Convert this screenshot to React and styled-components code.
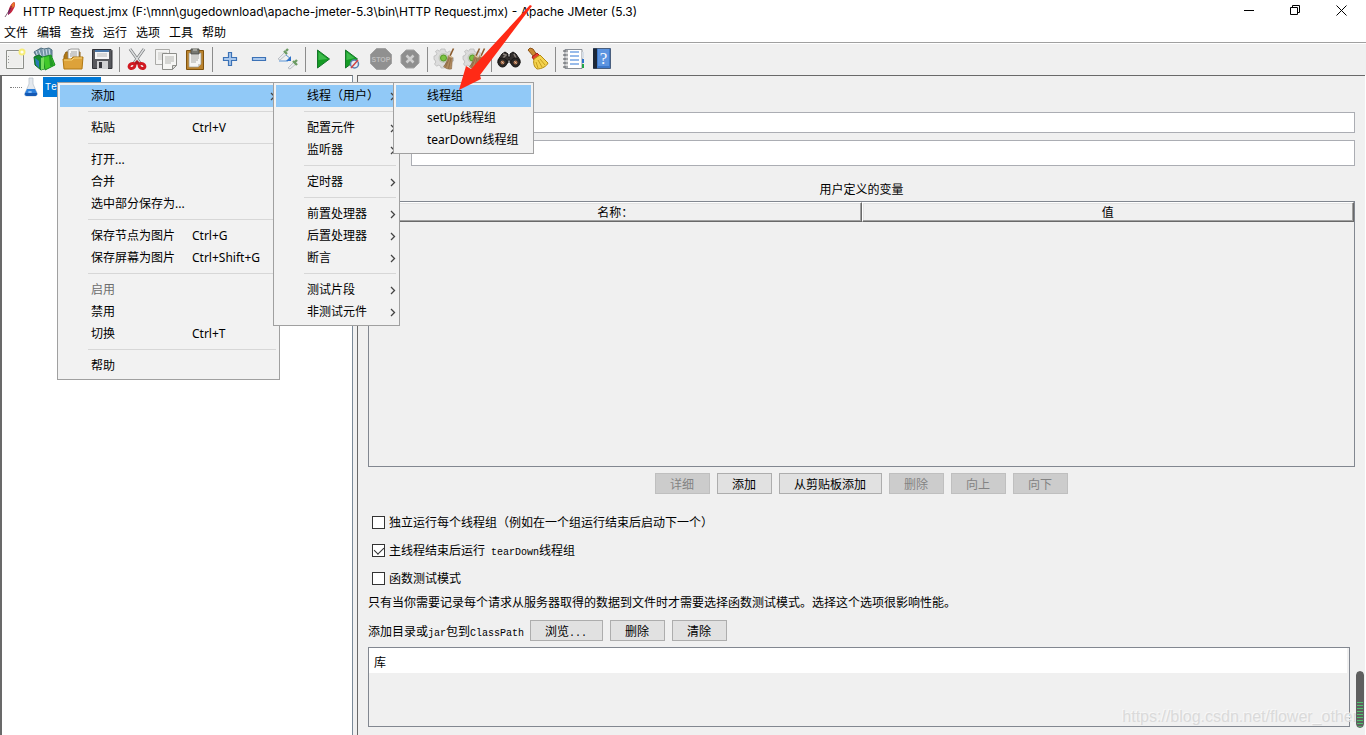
import React from "react";
import styled, { createGlobalStyle } from "styled-components";

// Data
const menuBar = ["文件", "编辑", "查找", "运行", "选项", "工具", "帮助"];

const threadMenu = [{ label: "线程组", active: true }, { label: "setUp线程组" }, { label: "tearDown线程组" }];

const addMenu = [
  { label: "线程（用户）", active: true, arrow: true, children: threadMenu, childWidth: 141 },
  null,
  { label: "配置元件", arrow: true },
  { label: "监听器", arrow: true },
  null,
  { label: "定时器", arrow: true },
  null,
  { label: "前置处理器", arrow: true },
  { label: "后置处理器", arrow: true },
  { label: "断言", arrow: true },
  null,
  { label: "测试片段", arrow: true },
  { label: "非测试元件", arrow: true },
];

const contextMenu = [
  { label: "添加", active: true, arrow: true, children: addMenu, childWidth: 127 },
  null,
  { label: "粘贴", shortcut: "Ctrl+V" },
  null,
  { label: "打开..." },
  { label: "合并" },
  { label: "选中部分保存为..." },
  null,
  { label: "保存节点为图片", shortcut: "Ctrl+G" },
  { label: "保存屏幕为图片", shortcut: "Ctrl+Shift+G" },
  null,
  { label: "启用", disabled: true },
  { label: "禁用" },
  { label: "切换", shortcut: "Ctrl+T" },
  null,
  { label: "帮助" },
];

// Toolbar drawings, all on a 24 x 24 grid
const Gear = () => (
  <>
    <path
      d="M8 2h4l.5 2.5 2 .8L16.700 4l2 2.300-1.400 2 .8 2 2.400.5v3.200l-2.400.5-.8 2L18.500 18.500 16 20.500l-2-1.500-2 .8L11.500 21H8l-.5-2-2-.8-2 1L1.500 17l1.300-2-.8-2L1 12.500V9l2-.5.800-2L2.500 4.500 4.500 3l2 1.200z"
      fill="#dcdcdc"
      stroke="#b4b4b4"
      strokeWidth=".7"
    />
    <circle cx="10.500" cy="11" r="5" fill="#c2c9bb" />
    <circle cx="10.500" cy="11" r="3" fill="#7cc242" stroke="#559a25" />
  </>
);

const Brush = ({ x = 0 }) => (
  <g transform={`translate(${x} 0)`}>
    <path d="M20.500 1.500L17 9" stroke="#8b5a2b" strokeWidth="1.600" />
    <path d="M15.500 8.500l4 2-1 11.500c-3 .5-6-.5-8-2.500 2-2 4-6 5-11z" fill="#b08a5e" stroke="#8a6844" strokeWidth=".6" />
    <path d="M16.500 10.500l-4 10M18 11l-2.500 10.500M14 15l-2.500 4" stroke="#7d5c3a" strokeWidth=".6" />
    <path d="M15.500 8.500l4 2" stroke="#e0c7a0" strokeWidth="1.200" />
  </g>
);

const icons = {
  新建: (
    <>
      <path d="M3.500 3.500h17v18h-17z" fill="#f4f5f3" stroke="#8d8f8a" />
      <path d="M5 5h14v15H5z" fill="#eeeeec" />
      <path d="M5.500 9v1M5.500 12v1M5.500 15v1" stroke="#999" />
      <circle cx="19" cy="5" r="3.500" fill="#f6ec78" />
      <circle cx="19" cy="5" r="1.600" fill="#fffef0" />
    </>
  ),
  模板: (
    <>
      <path d="M2 5l7-4 3 1 5-1 3 2v7L6 12z" fill="#7796a8" stroke="#526f80" />
      <path d="M4 4l2 6M7 3l2 6M11 2l1 7M14 2l1 6M17 2l1 6" stroke="#cbdde8" />
      <path d="M2 10l5-2 5 3v11l-3 1-6-5z" fill="#168e2d" stroke="#0c6e23" />
      <path d="M3 11l4 3v7l-3-3z" fill="#2a7ab5" />
      <path d="M11 10l8-2 4 10-10 5z" fill="#41c82a" stroke="#168d1d" />
      <path d="M17 9h2l3 10h-4z" fill="#239a26" />
      <path d="M9 11l3-1v12l-3 1z" fill="#75dc5b" />
    </>
  ),
  打开: (
    <>
      <path d="M3 9l2-4h14v13H3z" fill="#b17815" stroke="#916313" />
      <path d="M7 3l3-1h8v12H7z" fill="#f4f4f2" stroke="#888" strokeWidth=".8" />
      <path d="M10 5h6M9 7h7M9 9h7" stroke="#a1a1a1" />
      <path d="M2 12h8l2-2h10l-1 12H3z" fill="#dda23a" stroke="#b17913" />
      <path d="M3 13h8l2-2h8" stroke="#f8d77d" />
    </>
  ),
  保存: (
    <>
      <path d="M3 2.500h18l1 1v18H2.500v-19z" fill="#57585d" stroke="#323338" />
      <path d="M5 3h14v9H5z" fill="#f6f6f6" />
      <path d="M5 3h14v2H5z" fill="#4976a8" />
      <path d="M7 7h10M7 9h10" stroke="#b7b7b7" />
      <path d="M7 14h11v8H7z" fill="#d0d1d3" />
      <path d="M9 15h3v6H9z" fill="#35363c" />
    </>
  ),
  剪切: (
    <>
      <path d="M5 2l10 14M19 2L9 16" stroke="#777a7c" strokeWidth="3" />
      <path d="M5 2l10 14M19 2L9 16" stroke="#dddfe0" strokeWidth="1.400" />
      <ellipse cx="7" cy="19" rx="3" ry="2.400" stroke="#d01921" strokeWidth="3" transform="rotate(-25 7 19)" />
      <ellipse cx="17" cy="19" rx="3" ry="2.400" stroke="#d01921" strokeWidth="3" transform="rotate(25 17 19)" />
      <path d="M9 16l3-3 3 3-3 2z" fill="#b4151c" />
    </>
  ),
  复制: (
    <>
      <path d="M1.500 2.500h14v15h-14z" fill="#f3f3f2" stroke="#aaaaa7" />
      <path d="M4 6h9M4 8h9M4 10h9M4 12h6" stroke="#c8c8c5" />
      <path d="M8.500 6.500h14v12l-4 4h-10z" fill="#f6f6f4" stroke="#8c8d89" />
      <path d="M11 10h9M11 12h9M11 14h9M11 16h6" stroke="#b4b5b1" />
      <path d="M18.500 22.500v-4h4z" fill="#dadad6" stroke="#8c8d89" />
    </>
  ),
  粘贴: (
    <>
      <path d="M3.500 3.500h17v19h-17z" fill="#ba832e" stroke="#80530e" />
      <path d="M6 6h12v11l-3 3H6z" fill="#f5f5f3" stroke="#9c9d98" strokeWidth=".7" />
      <path d="M8 9h8M8 11h8M8 13h7M8 15h5" stroke="#a9aaa6" />
      <path d="M8 2h8v5H8z" fill="#777972" stroke="#50524e" />
      <path d="M10 1h4v3h-4z" fill="#a3a49e" />
      <path d="M15 20v-3h3z" fill="#ccccc8" />
    </>
  ),
  展开: <path d="M10.500 5.500h3v5h5v3h-5v5h-3v-5h-5v-3h5z" fill="#a9c8ed" stroke="#3c72b6" strokeWidth="1.200" />,
  折叠: <path d="M5.500 10.500h13v3h-13z" fill="#a9c8ed" stroke="#3c72b6" strokeWidth="1.200" />,
  切换: (
    <>
      <path d="M2 12l7-7 2 2-7 6z" fill="#e9ecef" stroke="#a7adb4" strokeWidth=".7" />
      <path d="M8 4l3 3M10 4l2-2" stroke="#6c9b63" strokeWidth="2.400" />
      <path d="M3 14h9M10 8l5 4" stroke="#5b95d6" />
      <path d="M15 9v5h-5z" fill="#2f72c8" />
      <path d="M12 21l6-6 2 2-6 5z" fill="#e9ecef" stroke="#a7adb4" strokeWidth=".7" />
      <path d="M17 14l4 4M19 15l2-2" stroke="#6c9b63" strokeWidth="2.400" />
    </>
  ),
  启动: (
    <>
      <path d="M6.500 3L18.500 12 6.500 21z" fill="#159b24" stroke="#16762b" />
      <path d="M7.500 5l9 7-9 1z" fill="#3dbb4b" />
    </>
  ),
  不停顿开始: (
    <>
      <path d="M5.500 3L17.500 12 5.500 21z" fill="#159b24" stroke="#16762b" />
      <path d="M6.500 5l8 6-8 2z" fill="#3dbb4b" />
      <circle cx="14.500" cy="17" r="4" fill="#e5edf5" stroke="#5981b2" strokeWidth="1.500" />
      <path d="M11 21l7-8" stroke="#d34444" strokeWidth="1.500" />
    </>
  ),
  停止: (
    <>
      <path d="M7.500 1.500h9l6 6v9l-6 6h-9l-6-6v-9z" fill="#909090" stroke="#a2a2a2" />
      <text x="12" y="15" textAnchor="middle" fontFamily="Liberation Sans, sans-serif" fontSize="7" fontWeight="bold" fill="#bcbcbc">
        STOP
      </text>
    </>
  ),
  关闭: (
    <>
      <path d="M8 3h8l5 5v8l-5 5H8l-5-5V8z" fill="#8f8f8f" stroke="#a4a4a4" />
      <path d="M8.500 8.500l7 7M15.500 8.500l-7 7" stroke="#cfcfcf" strokeWidth="2.500" />
    </>
  ),
  清除: (
    <>
      <Gear />
      <Brush />
    </>
  ),
  清除全部: (
    <>
      <Gear />
      <Brush x={-3} />
      <Brush x={2} />
    </>
  ),
  查找: (
    <>
      <path d="M5 7l3-2 3 2v3h2V7l3-2 3 2 4 6v3H13v-3h-2v3H1v-3z" fill="#332f2d" stroke="#171514" />
      <path d="M6 7l3 1-3 3M17 7l2 4" stroke="#89817b" strokeWidth="1.500" />
      <circle cx="5.500" cy="15.500" r="4.500" fill="#2a2725" stroke="#191716" />
      <circle cx="18.500" cy="15.500" r="4.500" fill="#2a2725" stroke="#191716" />
      <circle cx="5.500" cy="15.500" r="2" fill="#a96f4b" />
      <circle cx="18.500" cy="15.500" r="2" fill="#a96f4b" />
      <path d="M4.500 14.500l2 2M17.500 14.500l2 2" stroke="#d8c3b0" />
    </>
  ),
  清空查找: (
    <>
      <path d="M2 3l2-2 3 1 4 6-3 2z" fill="#c98a35" stroke="#8d5317" />
      <path d="M6 10l5-4 3 3-6 4z" fill="#e3402f" stroke="#a51e14" />
      <path d="M8 12l6-4 8 8c-1 3-6 6-11 6-3-2-4-6-3-10z" fill="#f3d24e" stroke="#b68c12" />
      <path d="M12 13l4 7M14 12l5 6M10 15l2 6" stroke="#c89d1d" />
    </>
  ),
  函数助手: (
    <>
      <path d="M4 2.500h17v19H4z" fill="#fff" stroke="#8a8f96" />
      <path d="M21 5h2v6h-2z" fill="#d7dee6" />
      <path d="M21 12h2v4h-2z" fill="#2c73cf" />
      <path d="M21 17h2v4h-2z" fill="#21a546" />
      <path d="M9 5h9M9 9h9M9 13h9M9 17h9" stroke="#3379d6" strokeWidth="1.200" />
      <path d="M2 4h5M2 8h5M2 12h5M2 16h5M2 20h5" stroke="#4b4e52" strokeWidth="1.200" />
      <path d="M5 6h2M5 10h2M5 14h2M5 18h2" stroke="#b7b7b7" />
    </>
  ),
  帮助: (
    <>
      <path d="M3.500 1.500h17v20h-17z" fill="#3d78ca" stroke="#4a5f7e" />
      <path d="M3 1.500h4v20H3z" fill="#1d2838" />
      <path d="M8 2h11v17H8z" fill="#5c94e0" />
      <text x="13.500" y="17" textAnchor="middle" fontFamily="Liberation Serif, serif" fontSize="17" fill="#f6f9ff">
        ?
      </text>
    </>
  ),
};

const toolGroups = [
  ["新建", "模板", "打开", "保存"],
  ["剪切", "复制", "粘贴"],
  ["展开", "折叠", "切换"],
  ["启动", "不停顿开始", "停止", "关闭"],
  ["清除", "清除全部"],
  ["查找", "清空查找"],
  ["函数助手", "帮助"],
];

const Menu = ({ items, width, nested }) => {
  const Box = nested ? SubMenu : ContextMenu;
  return (
    <Box $width={width}>
      {items.map((item, index) => {
        if (!item) return <MenuLine key={index} />;
        return (
          <MenuRow key={index}>
            <MenuItem type="button" $active={item.active} disabled={item.disabled}>
              <MenuLabel $fixed={Boolean(item.shortcut)}>{item.label}</MenuLabel>
              {item.shortcut && <span>{item.shortcut}</span>}
              {item.arrow && (
                <MenuArrow width="6" height="9" viewBox="0 0 6 9">
                  <path d="M1 1l3.500 3.500L1 8" fill="none" stroke="#444" strokeWidth="1.300" />
                </MenuArrow>
              )}
            </MenuItem>
            {item.children && <Menu items={item.children} width={item.childWidth} nested />}
          </MenuRow>
        );
      })}
    </Box>
  );
};

const TitleBarSection = () => (
  <TitleBar>
    <svg width="12" height="16" viewBox="0 0 12 16">
      <path d="M10 0c2 1 1 5-1 8-1 2-3 4-5 5 0-5 2-11 6-13z" fill="#c8273c" />
      <path d="M10 0c1 1 1 3 0 5l-3 1c0-2 1-5 3-6z" fill="#e9782c" />
      <path d="M4 13c0-3 1-5 2-7 1 3 0 5-2 7z" fill="#7b2c79" />
      <path d="M8 4L1 15" stroke="#52213d" strokeWidth=".7" />
    </svg>
    <Title>HTTP Request.jmx (F:\mnn\gugedownload\apache-jmeter-5.3\bin\HTTP Request.jmx) - Apache JMeter (5.3)</Title>
    <WindowButton type="button" aria-label="最小化">
      <svg width="11" height="11" viewBox="0 0 11 11">
        <path d="M0 5.500h10" stroke="#000" />
      </svg>
    </WindowButton>
    <WindowButton type="button" aria-label="还原">
      <svg width="11" height="11" viewBox="0 0 11 11">
        <path d="M.5 2.500h7v7h-7zM2.500 2V.5h7v7H8" fill="none" stroke="#000" />
      </svg>
    </WindowButton>
    <WindowButton type="button" aria-label="关闭">
      <svg width="11" height="11" viewBox="0 0 11 11">
        <path d="M.5 .5l10 10M10.500 .5l-10 10" stroke="#000" />
      </svg>
    </WindowButton>
  </TitleBar>
);

const App = () => {
  return (
    <Window>
      <GlobalStyle />
      <TitleBarSection />
      <MenuBar>
        {menuBar.map((name) => (
          <MenuBarButton type="button" key={name}>
            {name}
          </MenuBarButton>
        ))}
      </MenuBar>
      <ToolBar>
        {toolGroups.map((group, index) => (
          <React.Fragment key={index}>
            {index > 0 && <ToolLine />}
            {group.map((name) => (
              <ToolButton type="button" key={name} aria-label={name}>
                <svg width="24" height="24" viewBox="0 0 24 24" fill="none">
                  {icons[name]}
                </svg>
              </ToolButton>
            ))}
          </React.Fragment>
        ))}
      </ToolBar>

      <Workspace>
        <TreePane>
          <TreeNode>
            <TreeDots />
            <svg width="14" height="20" viewBox="0 0 14 20">
              <path d="M5 1h4v6l4 9c1 2-1 3-2 3H3c-2 0-3-1-2-3l4-9z" fill="#e3e8ee" stroke="#b5bec8" strokeWidth=".7" />
              <path d="M3 12h8l2 4c1 2-1 3-2 3H3c-2 0-3-1-2-3z" fill="#2b7fdc" />
              <path d="M1 16h12c0 2-1 3-2 3H3c-1 0-2-1-2-3z" fill="#1458b3" />
              <ellipse cx="6" cy="15" rx="2" ry="1" fill="#8cc2f7" />
            </svg>
            <TreeLabel>Test Plan</TreeLabel>
          </TreeNode>
          <Menu items={contextMenu} width={223} />
        </TreePane>

        <PlanPane>
          <FieldRow>
            <label htmlFor="name">名称：</label>
            <TextInput id="name" $height={21} />
          </FieldRow>
          <FieldRow>
            <label htmlFor="comment">注释：</label>
            <TextInput id="comment" $height={26} />
          </FieldRow>

          <TableTitle>用户定义的变量</TableTitle>
          <TableFrame>
            <VariableTable>
              <thead>
                <tr>
                  <th>名称：</th>
                  <th>值</th>
                </tr>
              </thead>
            </VariableTable>
          </TableFrame>
          <ButtonRow>
            <Button type="button" disabled>
              详细
            </Button>
            <Button type="button">添加</Button>
            <Button type="button">从剪贴板添加</Button>
            <Button type="button" disabled>
              删除
            </Button>
            <Button type="button" disabled>
              向上
            </Button>
            <Button type="button" disabled>
              向下
            </Button>
          </ButtonRow>

          <Options>
            <Option>
              <CheckBox />
              <span>独立运行每个线程组（例如在一个组运行结束后启动下一个）</span>
            </Option>
            <Option>
              <CheckBox defaultChecked />
              <span>
                主线程结束后运行<Mono> tearDown</Mono>线程组
              </span>
            </Option>
            <Option>
              <CheckBox />
              <span>函数测试模式</span>
            </Option>
          </Options>
          <Hint>只有当你需要记录每个请求从服务器取得的数据到文件时才需要选择函数测试模式。选择这个选项很影响性能。</Hint>

          <ClassPathRow>
            <ClassPathLabel>
              添加目录或<Mono>jar</Mono>包到<Mono>ClassPath</Mono>
            </ClassPathLabel>
            <Button type="button">
              浏览<Mono>...</Mono>
            </Button>
            <Button type="button">删除</Button>
            <Button type="button">清除</Button>
          </ClassPathRow>
          <LibraryFrame>
            <LibraryTable>
              <thead>
                <tr>
                  <th>库</th>
                </tr>
              </thead>
            </LibraryTable>
          </LibraryFrame>
        </PlanPane>
      </Workspace>

      <Watermark>https://blog.csdn.net/flower_other</Watermark>
      <LevelMeter />
      <Pointer width="80" height="90" viewBox="0 0 80 90">
        <path d="M75 1l2 1L25 71l1 4L4 86l7-24 5 3z" fill="#ff2a16" />
      </Pointer>
    </Window>
  );
};

export default App;

const GlobalStyle = createGlobalStyle`
  * {
    box-sizing: border-box;
  }
  body {
    margin: 0;
    background: #f0f0f0;
    color: #000;
    font-family: "Noto Sans", "Noto Sans CJK SC", sans-serif;
    font-size: 12px;
    line-height: 16px;
  }
  button, input {
    font: inherit;
    color: inherit;
    margin: 0;
  }
`;

const Window = styled.div`
  position: relative;
  display: flex;
  flex-direction: column;
  min-height: 100vh;
  overflow: hidden;
`;

const TitleBar = styled.header`
  display: flex;
  align-items: center;
  height: 24px;
  padding: 0 2px 4px 4px;
  background: #fff;
`;

const Title = styled.h1`
  flex: 1;
  margin: 4px 0 0 7px;
  font-family: Inter, "Noto Sans", sans-serif;
  font-size: 12px;
  font-weight: normal;
  white-space: nowrap;
`;

const WindowButton = styled.button`
  display: flex;
  justify-content: center;
  align-items: center;
  width: 46px;
  height: 20px;
  padding: 0;
  border: none;
  background: none;
`;

const MenuBar = styled.nav`
  display: flex;
  gap: 9px;
  height: 19px;
  padding: 0 4px;
  background: #fff;
  border-bottom: 1px solid #a0a0a0;
`;

const MenuBarButton = styled.button`
  padding: 0;
  border: none;
  background: none;
`;

const ToolBar = styled.div`
  display: flex;
  align-items: center;
  gap: 5px;
  height: 32px;
  padding: 0 3px;
  border-top: 1px solid #fff;
`;

const ToolButton = styled.button`
  display: flex;
  padding: 0 0 2px;
  border: none;
  background: none;
`;

const ToolLine = styled.span`
  width: 1px;
  height: 25px;
  background: #8c8c8c;
`;

const Workspace = styled.main`
  display: flex;
  flex: 1;
  gap: 4px;
  border-right: 1px solid #fff;
`;

const TreePane = styled.aside`
  position: relative;
  flex: 0 0 353px;
  padding-top: 1px;
  background: #fff;
  border-top: 1px solid #696969;
  border-left: 2px solid #696969;
  border-right: 1px solid #7a8a99;
`;

const TreeNode = styled.div`
  display: flex;
  align-items: center;
  padding-left: 8px;
`;

const TreeDots = styled.span`
  width: 12px;
  margin-right: 2px;
  border-top: 1px dotted #808080;
`;

const TreeLabel = styled.span`
  margin-left: 5px;
  padding: 2px 2px 0;
  background: #0078d7;
  color: #fff;
  font-family: "Liberation Mono", monospace;
  font-size: 10px;
  line-height: 18px;
`;

const MenuBox = styled.ul`
  position: absolute;
  z-index: 1;
  width: ${(props) => props.$width}px;
  margin: 0;
  padding: 2px;
  list-style: none;
  background: #f2f2f2;
  border: 1px solid #a0a0a0;
`;

const ContextMenu = styled(MenuBox)`
  left: 55px;
  top: 6px;
`;

const SubMenu = styled(MenuBox)`
  left: calc(100% - 4px);
  top: -3px;
`;

const MenuRow = styled.li`
  position: relative;
`;

const MenuLine = styled.li`
  height: 1px;
  margin: 4px 1px 5px 28px;
  background: #d7d7d7;
`;

const MenuItem = styled.button`
  display: flex;
  align-items: center;
  width: 100%;
  height: 22px;
  padding: 0 1px 0 31px;
  border: none;
  background: ${(props) => (props.$active ? "#91c9f7" : "transparent")};
  text-align: left;
  white-space: nowrap;
  &:disabled {
    color: #6d6d6d;
  }
`;

const MenuLabel = styled.span`
  flex: ${(props) => (props.$fixed ? "0 0 101px" : "1")};
`;

const MenuArrow = styled.svg`
  flex: none;
`;

const PlanPane = styled.section`
  display: flex;
  flex-direction: column;
  flex: 1;
  min-width: 0;
  padding: 36px 10px 8px;
  border-top: 1px solid #696969;
  border-left: 1px solid #696969;
  font-family: "Noto Sans CJK SC", sans-serif;
`;

const FieldRow = styled.div`
  display: flex;
  align-items: center;
  margin-bottom: 7px;
  label {
    flex: 0 0 43px;
  }
`;

const TextInput = styled.input`
  flex: 1;
  height: ${(props) => props.$height}px;
  padding: 0 4px;
  border: 1px solid #abadb3;
  background: #fff;
`;

const TableTitle = styled.h3`
  margin: 8px 0 4px;
  font-size: 12px;
  font-weight: normal;
  text-align: center;
`;

const TableFrame = styled.div`
  flex: 1;
  min-height: 180px;
  border: 1px solid #828790;
`;

const VariableTable = styled.table`
  width: 100%;
  border-collapse: separate;
  border-spacing: 0;
  table-layout: fixed;
  th {
    height: 20px;
    padding: 0;
    font-weight: normal;
    border: 1px solid #fff;
    border-right-color: #696969;
    border-bottom-color: #696969;
    box-shadow: inset -1px -1px #a0a0a0, inset 1px 1px #e3e3e3;
  }
`;

const ButtonRow = styled.div`
  display: flex;
  justify-content: center;
  gap: 7px;
  margin-top: 6px;
`;

const Button = styled.button`
  height: 21px;
  padding: 0 15px 0 14px;
  border: 1px solid #adadad;
  background: #e1e1e1;
  line-height: 18px;
  white-space: nowrap;
  &:disabled {
    border-color: #bfbfbf;
    background: #ccc;
    color: #838383;
  }
`;

const Options = styled.div`
  display: flex;
  flex-direction: column;
  align-items: flex-start;
  margin-top: 14px;
  padding-left: 4px;
`;

const Option = styled.label`
  display: flex;
  align-items: center;
  gap: 4px;
  height: 28px;
`;

const CheckBox = styled.input.attrs({ type: "checkbox" })`
  appearance: none;
  display: flex;
  justify-content: center;
  width: 13px;
  height: 13px;
  border: 1px solid #333;
  background: #fff;
  &:checked::after {
    content: "";
    width: 5px;
    height: 8px;
    border: solid #333;
    border-width: 0 1px 1px 0;
    transform: rotate(45deg);
  }
`;

const Mono = styled.span`
  font-family: "Liberation Mono", monospace;
  font-size: 10px;
  line-height: 1;
  white-space: pre;
`;

const Hint = styled.p`
  margin: 0;
  line-height: 20px;
`;

const ClassPathRow = styled.div`
  display: flex;
  align-items: center;
  gap: 7px;
  margin-top: 8px;
`;

const ClassPathLabel = styled.span`
  margin-right: -1px;
`;

const LibraryFrame = styled.div`
  height: 80px;
  margin: 6px 5px 0 0;
  padding-right: 2px;
  border: 1px solid #828790;
`;

const LibraryTable = styled.table`
  width: 100%;
  border-spacing: 0;
  background: #fff;
  th {
    height: 25px;
    padding: 2px 5px 0;
    font-weight: normal;
    text-align: left;
  }
`;

const Watermark = styled.span`
  position: absolute;
  right: 8px;
  bottom: 9px;
  color: #dadada;
  font-family: "Liberation Sans", sans-serif;
  font-size: 16px;
  line-height: 18px;
  text-shadow: -1px -1px #f8f8f8;
`;

const LevelMeter = styled.span`
  position: absolute;
  right: 2px;
  bottom: 7px;
  width: 8px;
  height: 57px;
  border: 1px solid #5f5f5f;
  border-radius: 4px;
  background: linear-gradient(#5f5f5f 30px, transparent 30px),
    repeating-linear-gradient(#50c06d 0 1px, #5f5f5f 1px 3px);
`;

const Pointer = styled.svg`
  position: absolute;
  left: 455px;
  top: 4px;
  z-index: 2;
  pointer-events: none;
`;
